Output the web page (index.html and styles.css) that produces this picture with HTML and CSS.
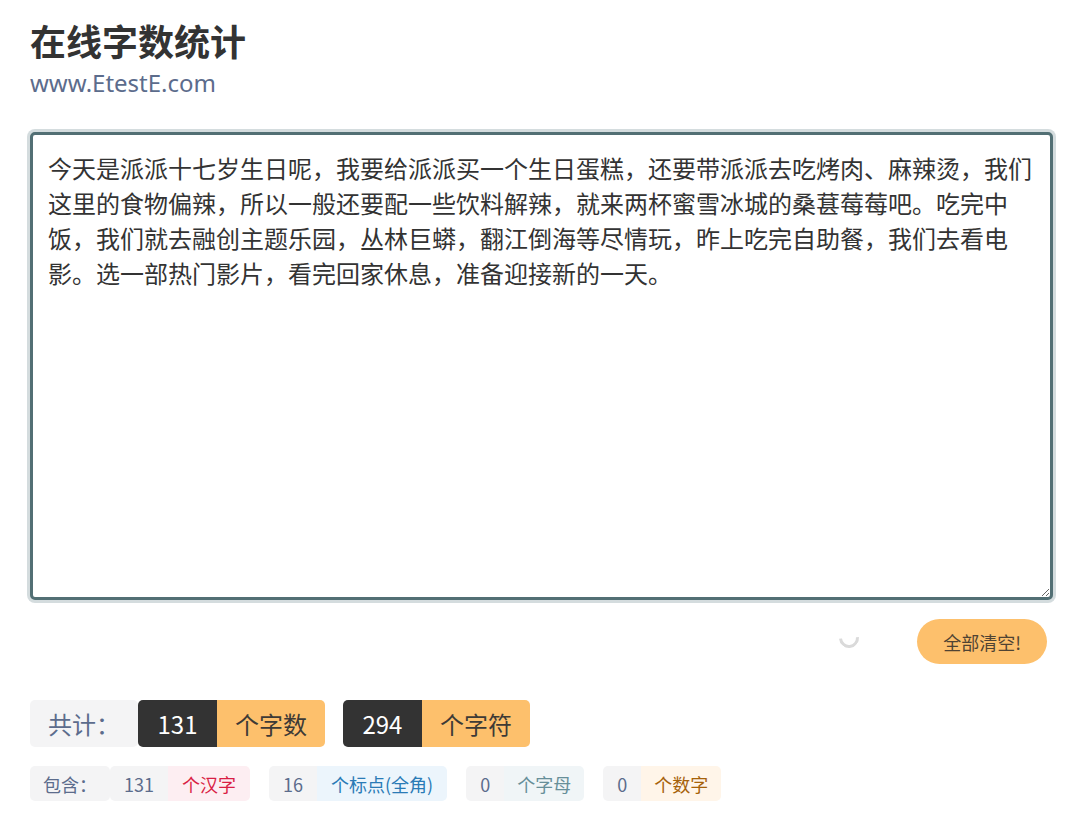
FILE: index.html
```html
<!DOCTYPE html>
<html lang="zh-CN">
<head>
    <meta charset="UTF-8">
    <meta name="viewport" content="width=device-width, initial-scale=1.0">
    <title>在线字数统计</title>
    <link rel="stylesheet" href="styles.css">
</head>
<body>
    <div class="page">
        <header class="header">
            <h1>在线字数统计</h1>
            <p class="site">www.EtestE.com</p>
        </header>

        <textarea id="content" class="editor">今天是派派十七岁生日呢，我要给派派买一个生日蛋糕，还要带派派去吃烤肉、麻辣烫，我们这里的食物偏辣，所以一般还要配一些饮料解辣，就来两杯蜜雪冰城的桑葚莓莓吧。吃完中饭，我们就去融创主题乐园，丛林巨蟒，翻江倒海等尽情玩，昨上吃完自助餐，我们去看电影。选一部热门影片，看完回家休息，准备迎接新的一天。</textarea>

        <div class="actions">
            <span class="spinner"></span>
            <button type="button" class="btn-clear">全部清空!</button>
        </div>

        <div class="total">
            <span class="label">共计：</span>
            <span class="group">
                <span class="num">131</span><span class="unit">个字数</span>
            </span>
            <span class="group">
                <span class="num">294</span><span class="unit">个字符</span>
            </span>
        </div>

        <div class="detail">
            <span class="label">包含：</span>
            <span class="group">
                <span class="num">131</span><span class="unit unit-han">个汉字</span>
            </span>
            <span class="group">
                <span class="num">16</span><span class="unit unit-punct">个标点(全角)</span>
            </span>
            <span class="group">
                <span class="num">0</span><span class="unit unit-letter">个字母</span>
            </span>
            <span class="group">
                <span class="num">0</span><span class="unit unit-digit">个数字</span>
            </span>
        </div>
    </div>
</body>
</html>
```

FILE: styles.css
```css
* {
    margin: 0;
    padding: 0;
    box-sizing: border-box;
}

body {
    font-family: "Noto Sans", "Noto Sans CJK SC", sans-serif;
    background: #fff;
    color: #333;
}

.page {
    padding: 14px 28px 20px 30px;
}

.header h1 {
    font-family: "Noto Sans CJK SC", sans-serif;
    font-size: 36px;
    font-weight: 700;
    line-height: 52px;
    color: #333;
}

.site {
    font-size: 24px;
    line-height: 33px;
    color: #5c6c8c;
}

.editor {
    display: block;
    width: 100%;
    height: 468px;
    margin-top: 33px;
    padding: 15px 15px;
    border: 3px solid #526f74;
    border-radius: 5px;
    box-shadow: 0 0 0 3px #d4dcde;
    font-family: "Noto Sans CJK SC", sans-serif;
    font-size: 24px;
    line-height: 35px;
    color: #333;
    background: #fff;
    outline: none;
}

.actions {
    display: flex;
    justify-content: flex-end;
    align-items: center;
    gap: 58px;
    margin-top: 19px;
    padding-right: 6px;
}

.spinner {
    width: 20px;
    height: 20px;
    border: 3px solid transparent;
    border-bottom-color: #dadada;
    border-left-color: #dadada;
    border-radius: 50%;
    transform: rotate(-50deg);
    margin-top: -8px;
}

.btn-clear {
    height: 45px;
    padding: 0 26px;
    border: none;
    border-radius: 23px;
    background: #fdc06c;
    color: #4f4333;
    font-family: "Noto Sans CJK SC", sans-serif;
    font-size: 18px;
    cursor: pointer;
}

.total,
.detail {
    display: flex;
    align-items: stretch;
}

.total {
    margin-top: 36px;
    height: 47px;
    font-size: 24px;
}

.detail {
    margin-top: 19px;
    height: 35px;
    font-size: 18px;
}

.label,
.group {
    display: flex;
    align-items: center;
    border-radius: 5px;
    overflow: hidden;
}

.label,
.num,
.unit {
    display: flex;
    align-items: center;
    height: 100%;
    font-family: "Noto Sans CJK SC", sans-serif;
}

.label {
    background: #f4f4f5;
    color: #5c6c8c;
}

.total .label,
.total .num,
.total .unit {
    padding: 0 18px;
}

.detail .label,
.detail .num,
.detail .unit {
    padding: 0 14px;
}

.detail .label {
    padding: 0 13px;
}

.total .group + .group {
    margin-left: 18px;
}

.detail .group + .group {
    margin-left: 19px;
}

.total .num {
    background: #333;
    color: #fff;
    padding: 0 19.5px;
}

.total .unit {
    background: #fdc06c;
    color: #3d3a36;
}

.detail .num {
    background: #f4f4f5;
    color: #5c6c8c;
}

.detail .unit-letter,
.detail .unit-digit {
    padding: 0 13px;
}

.unit-han {
    background: #fdeef2;
    color: #d91e45;
}

.unit-punct {
    background: #ecf5fc;
    color: #2a7bb6;
}

.unit-letter {
    background: #f0f5f7;
    color: #678f99;
}

.unit-digit {
    background: #fff5e9;
    color: #a6620a;
}
```
